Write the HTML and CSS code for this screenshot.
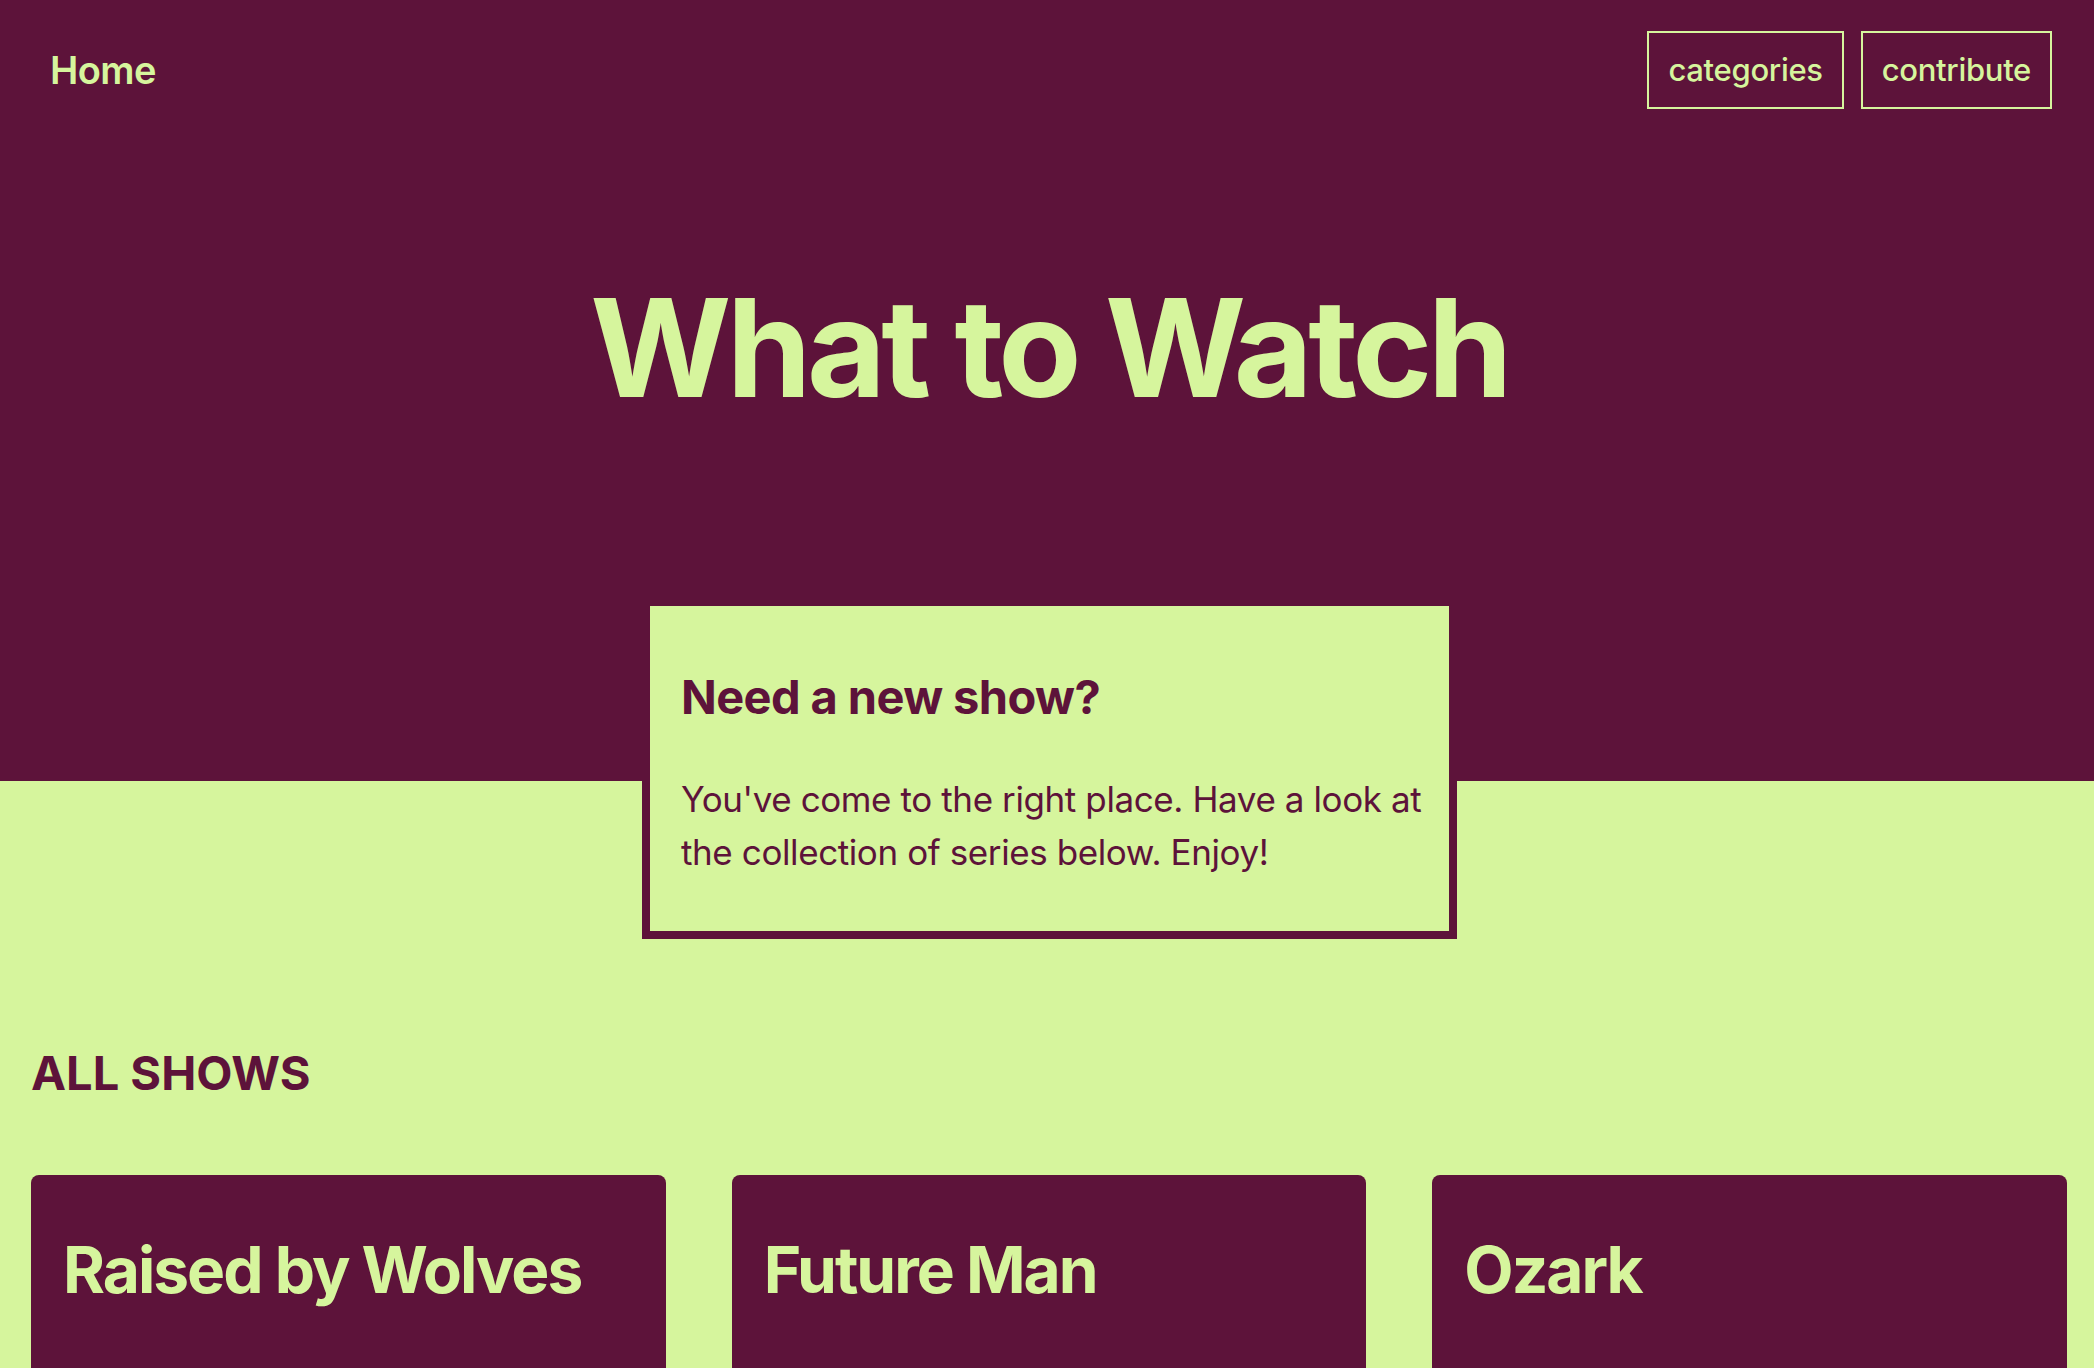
FILE: index.html
```html
<!DOCTYPE html>
<html lang="en">
<head>
<meta charset="utf-8">
<title>What to Watch</title>
<link rel="stylesheet" href="styles.css">
</head>
<body>
<header class="hero">
  <nav class="nav">
    <a class="nav-home" href="#">Home</a>
    <div class="nav-links">
      <a class="nav-btn" href="#">categories</a>
      <a class="nav-btn" href="#">contribute</a>
    </div>
  </nav>
  <h1 class="hero-title">What to Watch</h1>
</header>
<section class="intro">
  <h2 class="intro-title">Need a new show?</h2>
  <p class="intro-text">You've come to the right place. Have a look at the collection of series below. Enjoy!</p>
</section>
<main class="shows">
  <h2 class="shows-heading">ALL SHOWS</h2>
  <div class="show-grid">
    <article class="show-card"><h3 class="show-title">Raised by Wolves</h3></article>
    <article class="show-card"><h3 class="show-title">Future Man</h3></article>
    <article class="show-card"><h3 class="show-title">Ozark</h3></article>
  </div>
</main>
</body>
</html>
```
FILE: styles.css
```css
* { box-sizing: border-box; }
html, body { margin: 0; padding: 0; }
body {
  background: #d6f59d;
  color: #5d133a;
  font-family: Inter, "Noto Sans", sans-serif;
}
a { text-decoration: none; color: inherit; }

.hero {
  background: #5d133a;
  color: #d6f59d;
  height: 781px;
  padding: 31px 42px 0 50px;
}
.nav {
  display: flex;
  justify-content: space-between;
  align-items: center;
}
.nav-home {
  font-size: 38px;
  font-weight: 600;
  letter-spacing: -0.6px;
}
.nav-links { display: flex; gap: 17px; }
.nav-btn {
  display: block;
  border: 2px solid #d6f59d;
  height: 78px;
  line-height: 74px;
  padding: 0 19px;
  font-size: 31px;
  font-weight: 500;
  letter-spacing: -0.3px;
}
.hero-title {
  margin: 157px 0 0;
  text-align: center;
  font-size: 136px;
  font-weight: 700;
  letter-spacing: -4.5px;
  line-height: 1.2;
  margin-left: -4px;
}

.intro {
  width: 815px;
  margin: -183px 0 0 calc(50% - 405px);
  background: #d6f59d;
  border: 8px solid #5d133a;
  padding: 31px 20px 31px 31px;
}
.intro-title {
  margin: 32px 0 0;
  font-size: 47px;
  font-weight: 700;
  letter-spacing: -0.6px;
  line-height: 1.2;
}
.intro-text {
  margin: 48px 0 21px;
  font-size: 35px;
  line-height: 53px;
  letter-spacing: -0.4px;
}

.shows { padding: 105px 27px 0 31px; }
.shows-heading {
  margin: 0 0 74px;
  font-size: 47px;
  font-weight: 700;
  letter-spacing: 0;
  line-height: normal;
}
.show-grid {
  display: grid;
  grid-template-columns: repeat(3, 1fr);
  gap: 66px;
}
.show-card {
  background: #5d133a;
  color: #d6f59d;
  border-radius: 8px;
  padding: 56px 32px;
  min-height: 400px;
}
.show-title {
  margin: 0;
  font-size: 64px;
  font-weight: 700;
  letter-spacing: -2px;
  line-height: normal;
}
```
